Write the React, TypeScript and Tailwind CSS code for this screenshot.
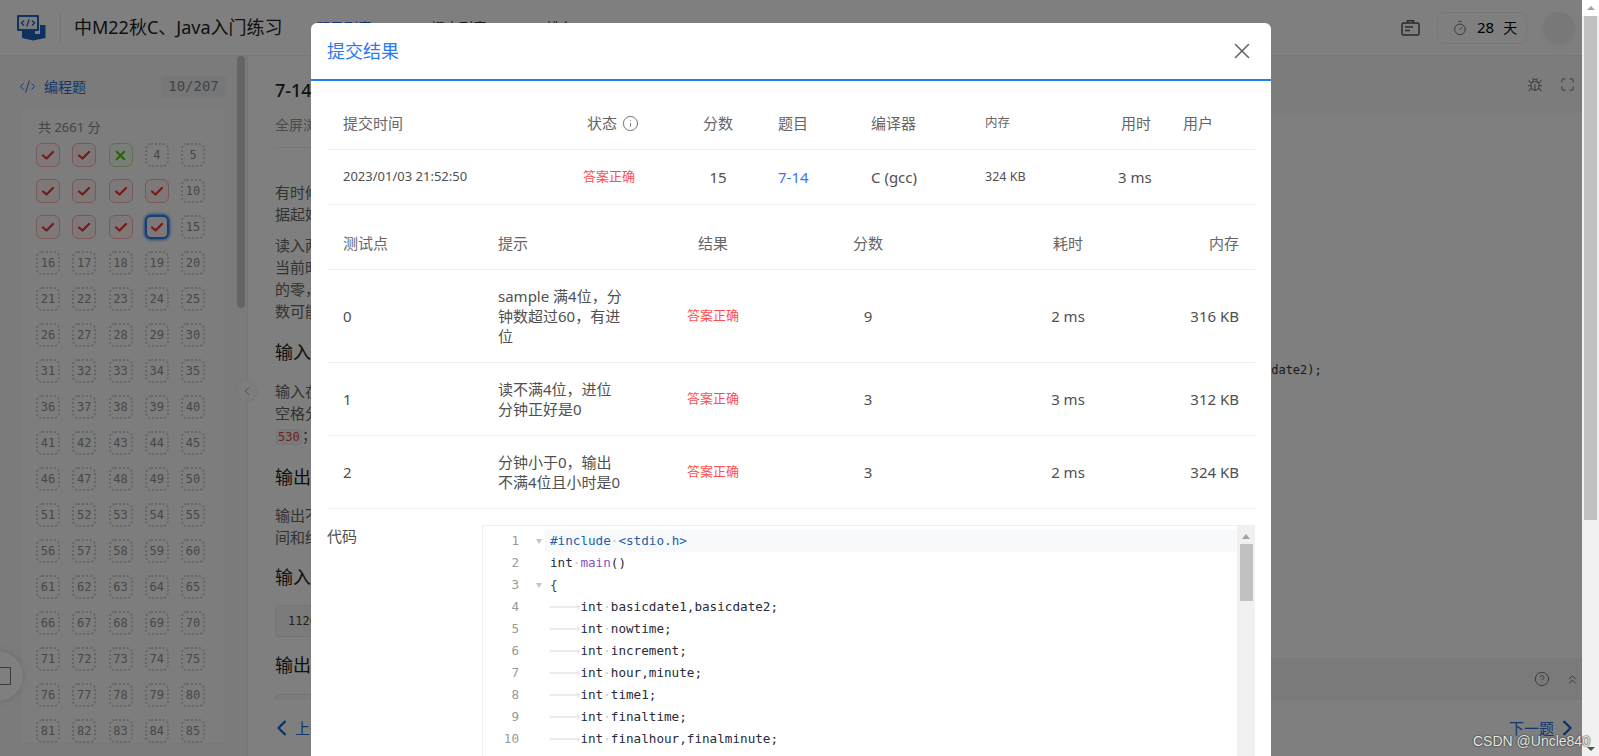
import { Bug, ChevronLeft, ChevronsUp, CircleHelp, CodeXml, Info, Maximize, Timer, X } from "lucide-react";

const doneCells: Record<number, "ok" | "wrong" | "active"> = {
  1: "ok", 2: "ok", 3: "wrong", 6: "ok", 7: "ok", 8: "ok", 9: "ok", 11: "ok", 12: "ok", 13: "ok", 14: "active",
};

function Check() {
  return (
    <svg width="14" height="12" viewBox="0 0 14 12" fill="none" stroke="currentColor" strokeWidth="2.2" strokeLinecap="round" strokeLinejoin="round">
      <path d="M2 6.5 5.5 9.5 12 3" />
    </svg>
  );
}

function Cell({ n }: { n: number }) {
  const state = doneCells[n];
  if (state === "ok")
    return <div className="w-6 h-6 rounded-md border border-[#f5b0b0] bg-[#fdf0f0] text-[#f03030] flex items-center justify-center"><Check /></div>;
  if (state === "wrong")
    return <div className="w-6 h-6 rounded-md border border-[#b5e59c] bg-[#f6fbf2] text-[#52c41a] flex items-center justify-center"><X size={15} strokeWidth={3.4} /></div>;
  if (state === "active")
    return <div className="w-6 h-6 rounded-md border-2 border-[#2a7ff0] shadow-[0_0_3px_1px_#3d8cf5] bg-[#fdf0f0] text-[#f03030] flex items-center justify-center"><Check /></div>;
  return (
    <div className="w-6 h-6 rounded-md border-2 border-dotted border-[#cccccc] text-[#8f8f8f] flex items-center justify-center font-['DejaVu_Sans_Mono',monospace] text-[12px]">
      {n}
    </div>
  );
}

function Logo() {
  return (
    <svg width="30" height="27" viewBox="0 0 30 27" fill="none">
      <rect x="1" y="1" width="22" height="16" fill="#2467bd" rx="1" />
      <rect x="3" y="3" width="18" height="12" fill="#f4f8ff" />
      <path d="M8 6.5 5.5 9 8 11.5M16 6.5 18.5 9 16 11.5M13.2 5.5 10.8 12.5" stroke="#1d5cb0" strokeWidth="1.2" fill="none" />
      <path d="M6 17h13v3h5v-9h5.5v13L17 26.5 6 24z" fill="#1f63c0" />
    </svg>
  );
}

function Header() {
  return (
    <header className="h-[56px] shrink-0 border-b border-[#eeeeee] bg-white flex items-center pl-[16px] pr-[7px]">
      <Logo />
      <div className="w-px h-8 bg-[#eeeeee] ml-[14px] mr-[13px]" />
      <div className="text-[18px] text-[#222222] whitespace-nowrap w-[242px]">中M22秋C、Java入门练习</div>
      <nav className="flex text-[14px] text-[#333333] gap-[59px]">
        <span className="text-[#1e6fe0]">题目列表</span>
        <span>提交列表</span>
        <span>排名</span>
      </nav>
      <div className="flex-1" />
      <svg width="19" height="17" viewBox="0 0 19 17" fill="none" stroke="#555555" strokeWidth="1.5">
        <rect x="1" y="4" width="17" height="12" rx="1.5" />
        <path d="M6.5 4V1.8h6V4" />
        <path d="M4 8h8M4 11.5h5" />
      </svg>
      <div className="ml-[17px] w-[90px] h-8 rounded-md border border-[#f0f0f0] flex items-center pl-[14px]">
        <Timer size={16} strokeWidth={1.5} className="text-[#777777]" />
        <span className="ml-[9px] text-[15px] text-black">28</span>
        <span className="ml-[9px] text-[14px] text-black">天</span>
      </div>
      <div className="ml-4 w-8 h-8 rounded-full bg-[#f0f0f0] shadow-[0_2px_6px_rgba(0,0,0,0.06)]" />
    </header>
  );
}

function Sidebar() {
  return (
    <aside className="relative w-[248px] h-full shrink-0 border-r border-[#ececec] bg-[#f6f6f6] overflow-hidden">
      <div className="pt-[13px] pl-[19px] pr-[21px] flex items-center justify-between h-[35px] box-content">
        <div className="flex items-center text-[#2a70d8] text-[14px]">
          <CodeXml size={17} strokeWidth={1.4} />
          <span className="ml-2">编程题</span>
        </div>
        <div className="w-[65px] h-[22px] rounded bg-[#eceef0] text-[#888888] font-['DejaVu_Sans_Mono',monospace] text-[14px] flex items-center justify-center">10/207</div>
      </div>
      <div className="ml-5 mt-[3px] w-[205px] rounded-t-lg bg-[#fbfbfb] border border-[#f3f3f3] pt-[9px] pl-[15px]">
        <div className="h-5 pl-[2px] text-[13px] text-[#888888] leading-5 mb-[6px]">共 2661 分</div>
        <div className="flex flex-wrap w-[170px] gap-x-[12.25px] gap-y-3">
          {Array.from({ length: 85 }, (_, i) => <Cell key={i} n={i + 1} />)}
        </div>
      </div>
      <div className="absolute top-0 right-[2px] w-[8px] h-[252px] rounded-full bg-[#c8c8c8]" />
    </aside>
  );
}

function Problem() {
  return (
    <section className="relative w-[560px] shrink-0 pl-[27px] h-full overflow-hidden bg-white">
      <div className="w-[520px]">
        <h1 className="mt-[22px] h-6 text-[18px] font-medium leading-6 text-[#222222]">7-14 然后是几点</h1>
        <div className="mt-[13px] h-5 leading-5 box-content pb-[12px] border-b border-[#eeeeee] text-[14px] text-[#999999]">全屏浏览题目 切换布局 作者 翁恺</div>
        <p className="mt-[33px] text-[15px] leading-[22px] text-[#666666] whitespace-nowrap">有时候人们用四位数字表示一个时间，比如 1106 表示 11 点零 6 分。现在<br />据起始时间和流逝的时间计算出终止时间。</p>
        <p className="mt-[9px] text-[15px] leading-[22px] text-[#666666] whitespace-nowrap">读入两个数字，第一个数字以这样的四位数字表示<br />当前时间，第二个数字表示分钟数，计算当前时间经过<br />的零，即 5 点 30 分表示为 530；注意，第二个数字表示的分钟<br />数可能超过 60，也可能是负数。</p>
        <h2 className="mt-[17px] h-[26px] text-[18px] leading-[26px] text-[#222222]">输入格式：</h2>
        <p className="mt-[15px] text-[15px] leading-[22px] text-[#666666] whitespace-nowrap">输入在一行中给出两个整数，分别是四位数字表示的起始时间，以<br />空格分隔。注意：在起始时间中，当小时为个位数时，没有前导的零，即<br />
          <code className="ml-[1px] font-['DejaVu_Sans_Mono',monospace] text-[12px] text-[#e04545] bg-[#f5f5f5] border border-[#eeeeee] rounded px-[1px]">530</code>；流逝的分钟数可能超过 60，也可能是负数。
        </p>
        <h2 className="mt-[16px] h-[26px] text-[18px] leading-[26px] text-[#222222]">输出格式：</h2>
        <p className="mt-[14px] text-[15px] leading-[22px] text-[#666666] whitespace-nowrap">输出不多于四位数字表示的终止时间，当小时为个位数时，没有前导的零。题目保证起始时<br />间和终止时间在同一天内。</p>
        <h2 className="mt-[16px] h-[26px] text-[18px] leading-[26px] text-[#222222]">输入样例：</h2>
        <div className="mt-[15px] h-8 rounded border border-[#e8e8e8] bg-[#f7f7f7] pl-[12px] flex items-center font-['DejaVu_Sans_Mono',monospace] text-[12px] text-[#444444]">1120 110</div>
        <h2 className="mt-[15px] h-[26px] text-[18px] leading-[26px] text-[#222222]">输出样例：</h2>
        <div className="mt-[16px] h-8 rounded border border-[#e8e8e8] bg-[#f7f7f7]" />
      </div>
    </section>
  );
}

function EditorPane() {
  return (
    <section className="flex-1 min-w-0 flex flex-col border-l border-[#eeeeee]">
      <div className="h-[57px] shrink-0 bg-[#f8f8f8] flex items-center justify-end pr-[7px] gap-[17px] text-[#666666]">
        <Bug size={16} strokeWidth={1.3} />
        <Maximize size={15} strokeWidth={1.5} />
      </div>
      <div className="flex-1 bg-white pt-[248px] pl-[231px] font-['DejaVu_Sans_Mono',monospace] text-[12px] leading-[18px] text-[#333333] whitespace-nowrap overflow-hidden">
        {'scanf("%d %d",&basicdate1,&basicdate2);'}
      </div>
      <div className="h-[42px] shrink-0 bg-[#f5f5f5] flex items-center justify-end pr-[2px] gap-[15px] text-[#666666]">
        <CircleHelp size={16} strokeWidth={1.3} />
        <ChevronsUp size={15} strokeWidth={1.5} />
      </div>
    </section>
  );
}

function NavChevron({ dir }: { dir: "left" | "right" }) {
  return (
    <svg width="10" height="16" viewBox="0 0 10 16" fill="none" stroke="#1760d0" strokeWidth="2.2">
      <path d={dir === "left" ? "M8.5 1 1.5 8l7 7" : "M1.5 1l7 7-7 7"} />
    </svg>
  );
}

function Footer() {
  return (
    <footer className="h-[56px] shrink-0 bg-white flex items-center justify-between pl-[29px] pr-[10px] text-[#1e6fe0] text-[15px]">
      <div className="flex items-center gap-2"><NavChevron dir="left" />上一题</div>
      <div className="flex items-center gap-2">下一题<NavChevron dir="right" /></div>
    </footer>
  );
}

const Dot = () => <span className="text-[#c8c8c8]">·</span>;

function Tab() {
  return (
    <svg width="30.4" height="8" viewBox="0 0 30.4 8" fill="none" stroke="#e2e2e2" className="inline-block align-baseline">
      <path d="M0 4h29" strokeWidth="1.4" />
      <path d="M27 1.5 29.6 4 27 6.5" strokeWidth="1" />
    </svg>
  );
}

function Decl({ text }: { text: string }) {
  return <><Tab /><span className="text-[#1f2d3d]">int</span><Dot /><span className="text-[#2a2a3a]">{text}</span></>;
}

const codeLines = [
  <><span className="text-[#1f5fae]">#include</span><Dot /><span className="text-[#1f5fae]">{"<stdio.h>"}</span></>,
  <><span className="text-[#1f2d3d]">int</span><Dot /><span className="text-[#8a52c8]">main</span><span className="text-[#2a2a3a]">()</span></>,
  <span className="text-[#444444]">{"{"}</span>,
  <Decl text="basicdate1,basicdate2;" />,
  <Decl text="nowtime;" />,
  <Decl text="increment;" />,
  <Decl text="hour,minute;" />,
  <Decl text="time1;" />,
  <Decl text="finaltime;" />,
  <Decl text="finalhour,finalminute;" />,
];

function CodeBox() {
  return (
    <div className="flex-1 h-[240px] flex border-t border-l border-[#eeeeee]">
      <div className="flex-1 pt-[4px] font-['DejaVu_Sans_Mono',monospace] text-[12.63px] leading-[22px]">
        {codeLines.map((line, i) => (
          <div key={i} className="flex h-[22px]">
            <span className="w-[36px] text-right text-[#999999] shrink-0">{i + 1}</span>
            <span className="w-[26px] shrink-0 pl-[17px] flex items-center">
              {(i === 0 || i === 2) && <span className="w-0 h-0 border-x-[3.5px] border-x-transparent border-t-[5px] border-t-[#c4c4c4]" />}
            </span>
            <div className={`flex-1 pl-[5px] whitespace-pre ${i === 0 ? "bg-[#f8f9fb]" : ""}`}>{line}</div>
          </div>
        ))}
      </div>
      <div className="w-[18px] shrink-0 bg-[#f1f1f1] flex flex-col items-center pt-[8px]">
        <span className="w-0 h-0 border-x-[4px] border-x-transparent border-b-[5px] border-b-[#a3a3a3]" />
        <div className="mt-[5px] w-[13px] h-[57px] bg-[#c1c1c1]" />
      </div>
    </div>
  );
}

function Modal() {
  const head = "text-[15px] text-[#666666]";
  const val = "text-[15px] text-[#505050]";
  const ok = "text-[13px] text-[#ff4d4f]";
  const testRows = [
    { id: "0", hint: ["sample 满4位，分", "钟数超过60，有进", "位"], score: "9", time: "2 ms", mem: "316 KB", h: "h-[92px]" },
    { id: "1", hint: ["读不满4位，进位", "分钟正好是0"], score: "3", time: "3 ms", mem: "312 KB", h: "h-[72px]" },
    { id: "2", hint: ["分钟小于0，输出", "不满4位且小时是0"], score: "3", time: "2 ms", mem: "324 KB", h: "h-[72px]" },
  ];
  const subCols = "grid grid-cols-[260px_116px_75px_93px_114px_133px_65px_72px] items-center border-b border-[#eeeeee]";
  const testCols = "grid grid-cols-[155px_185px_92px_218px_182px_96px] items-center border-b border-[#eeeeee]";
  return (
    <div className="w-[960px] h-[733px] mx-auto mt-[23px] bg-white rounded-t-md overflow-hidden">
      <div className="h-[58px] border-b-2 border-[#2080f0] flex items-center justify-between pl-[16px] pr-[16px]">
        <span className="text-[18px] text-[#2b7bf0]">提交结果</span>
        <X size={26} strokeWidth={1.5} className="text-[#666666]" />
      </div>
      <div className="pt-4 pl-[16px] pr-[16px]">
        <div className={`${subCols} h-[53px] ${head}`}>
          <span className="pl-4">提交时间</span>
          <span className="flex items-center gap-[5px]">状态<Info size={17} strokeWidth={1.3} /></span>
          <span>分数</span>
          <span>题目</span>
          <span>编译器</span>
          <span className="text-[12.5px]">内存</span>
          <span className="pl-[3px]">用时</span>
          <span>用户</span>
        </div>
        <div className={`${subCols} h-[55px] ${val}`}>
          <span className="pl-4 text-[13px]">2023/01/03 21:52:50</span>
          <span className={`${ok} -ml-1`}>答案正确</span>
          <span className="w-[30px] text-center">15</span>
          <span className="text-[#3b78e7]">7-14</span>
          <span>C (gcc)</span>
          <span className="text-[12.5px]">324 KB</span>
          <span>3 ms</span>
          <span />
        </div>

        <div className={`${testCols} mt-3 h-[53px] ${head}`}>
          <span className="pl-4">测试点</span>
          <span className="pl-4">提示</span>
          <span className="text-center">结果</span>
          <span className="text-center">分数</span>
          <span className="text-center">耗时</span>
          <span className="text-right pr-4">内存</span>
        </div>
        {testRows.map(r => (
          <div key={r.id} className={`${testCols} ${r.h} box-content ${val}`}>
            <span className="pl-4">{r.id}</span>
            <div className="pl-4 leading-5 whitespace-nowrap">
              {r.hint.map(line => <div key={line}>{line}</div>)}
            </div>
            <span className={`${ok} text-center`}>答案正确</span>
            <span className="text-center">{r.score}</span>
            <span className="text-center">{r.time}</span>
            <span className="text-right pr-4">{r.mem}</span>
          </div>
        ))}

        <div className="mt-4 flex items-start">
          <div className="w-[155px] text-[15px] text-[#505050] leading-[22px]">代码</div>
          <CodeBox />
        </div>
      </div>
    </div>
  );
}

export default function App() {
  return (
    <div className="relative h-[756px] w-[1599px] overflow-hidden flex bg-white font-['Noto_Sans','Noto_Sans_CJK_SC',sans-serif]">
      <div className="relative w-[1582px] h-full shrink-0 overflow-hidden flex flex-col">
        <Header />
        <div className="relative flex-1 min-h-0 flex">
          <Sidebar />
          <div className="relative flex-1 min-w-0 flex flex-col">
            <div className="flex-1 min-h-0 flex">
              <Problem />
              <EditorPane />
            </div>
            <Footer />
          </div>
          <div className="absolute left-[236px] top-[324px] w-[22px] h-[22px] rounded-full bg-[#fafafa] border border-[#eeeeee] flex items-center justify-center text-[#999999]">
            <ChevronLeft size={14} strokeWidth={1.6} />
          </div>
          <div className="absolute left-[-25px] top-[596px] w-[48px] h-[48px] rounded-full bg-white shadow-[0_0_8px_rgba(0,0,0,0.12)] flex items-center justify-end pr-[12px]">
            <div className="w-[12px] h-[18px] border border-[#777777]" />
          </div>
        </div>
        <div className="absolute inset-0 bg-black/50">
          <Modal />
        </div>
      </div>
      <div className="w-[17px] shrink-0 bg-[#f1f1f1] flex flex-col items-center">
        <div className="w-full h-[16px] bg-white flex items-center justify-center">
          <span className="w-0 h-0 border-x-[4px] border-x-transparent border-b-[4px] border-b-[#a3a3a3]" />
        </div>
        <div className="w-[13px] h-[504px] bg-[#c1c1c1]" />
        <div className="flex-1" />
        <span className="mb-[5px] w-0 h-0 border-x-[4px] border-x-transparent border-t-[4px] border-t-[#505050]" />
      </div>
      <div className="absolute left-[1473px] top-[731px] text-[14px] text-[#e8e8e8] font-['Liberation_Sans',sans-serif] [text-shadow:0_0_1.5px_#333,0_0_1.5px_#333]">CSDN @Uncle840</div>
    </div>
  );
}
